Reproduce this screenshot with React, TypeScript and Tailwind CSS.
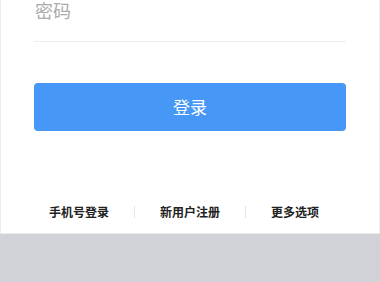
import React from 'react';

const links = ['手机号登录', '新用户注册', '更多选项'];

export default function App() {
  return (
    <div
      className="w-[380px] h-[282px] bg-[#d1d1d8] flex flex-col overflow-hidden"
      style={{ fontFamily: '"Noto Sans CJK SC", "Noto Sans", sans-serif' }}
    >
      <div className="h-[234px] bg-white border-x border-b border-[#ececec] flex flex-col">
        <div className="mx-[33px] h-[42px] border-b border-[#ececec] flex items-start">
          <span className="text-[18px] leading-[21px] text-[#ababab] pl-px">密码</span>
        </div>

        <button className="mx-[33px] mt-[41px] h-[48px] rounded-[4px] bg-[#4697f6] text-white text-[17px] flex items-center justify-center">
          登录
        </button>

        <div className="mt-[73px] flex items-center pl-[23px]">
          {links.map((label, i) => (
            <React.Fragment key={label}>
              {i > 0 && <div className="w-px h-[12px] bg-[#e6e6e6]" />}
              <span className="px-[25px] text-[12px] leading-[16px] font-semibold text-[#222]">
                {label}
              </span>
            </React.Fragment>
          ))}
        </div>
      </div>
    </div>
  );
}
